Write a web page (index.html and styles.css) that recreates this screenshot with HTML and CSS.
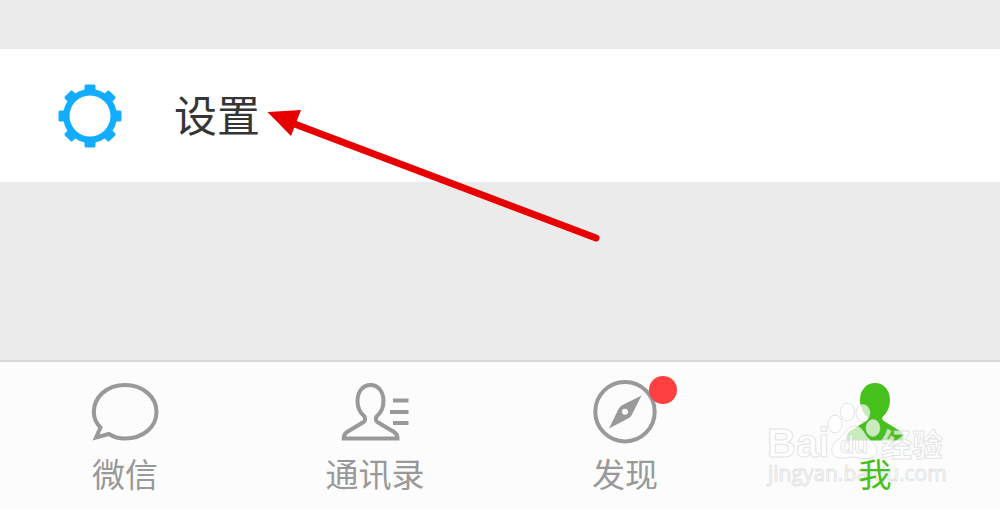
FILE: index.html
```html
<!DOCTYPE html>
<html lang="zh-CN">
<head>
<meta charset="utf-8">
<title>设置</title>
<link rel="stylesheet" href="styles.css">
</head>
<body>
<main class="content">
  <a class="row" href="#">
    <svg class="gear" viewBox="-32 -32 64 64" aria-hidden="true">
      <defs><rect id="tooth" x="-5.5" y="-31.5" width="11" height="10" rx="1.5"/></defs>
      <circle r="27"/>
      <use href="#tooth"/>
      <use href="#tooth" transform="rotate(45)"/>
      <use href="#tooth" transform="rotate(90)"/>
      <use href="#tooth" transform="rotate(135)"/>
      <use href="#tooth" transform="rotate(180)"/>
      <use href="#tooth" transform="rotate(225)"/>
      <use href="#tooth" transform="rotate(270)"/>
      <use href="#tooth" transform="rotate(315)"/>
      <circle class="hole" r="20.5"/>
    </svg>
    <span class="row-label">设置</span>
  </a>
  <svg class="arrow" viewBox="0 0 340 150" aria-hidden="true">
    <path class="shaft" d="M32 23L336 138"/>
    <path class="head" d="M7.500 12L41 10 31 36Z"/>
  </svg>
</main>
<nav class="tabs">
  <a class="tab" href="#">
    <svg class="icon" viewBox="0 0 104 70" aria-hidden="true">
      <path d="M36 59C40.500 62 46 63.500 52 63.500C70 63.500 83.500 52 83.500 37C83.500 22 70 10 52 10C34 10 20.800 22 20.800 37C20.800 43 23 48 27.500 52.500L23 62.500Z"/>
    </svg>
    <span class="tab-label">微信</span>
  </a>
  <a class="tab" href="#">
    <svg class="icon" viewBox="0 0 104 70" aria-hidden="true">
      <path d="M47.500 10C39.500 10 34.500 17 34.500 26C34.500 33 37.500 38 41 41Q42 42 42 43.500V45Q42 46 41 46.700L24 57Q20.800 59 20.800 63.500H74.500Q74.500 59 71 57L54 46.700Q53 46 53 45V43.500Q53 42 54 41C57.500 38 60.500 33 60.500 26C60.500 17 55.500 10 47.500 10ZM70 25.500H85.500M67 37H85.500M70 48H85.500"/>
    </svg>
    <span class="tab-label">通讯录</span>
  </a>
  <a class="tab" href="#">
    <span class="icon-wrap">
      <svg class="icon" viewBox="0 0 104 70" aria-hidden="true">
        <circle cx="52" cy="36.700" r="29.700"/>
        <path class="solid" fill-rule="evenodd" d="M68.500 20.500L59 39.500Q58 41.500 56 43L36 53.500 45.500 34Q46.500 32 48.500 30.500ZM52 33.800a3 3 0 1 0 0 6 3 3 0 1 0 0-6Z"/>
      </svg>
      <span class="dot"></span>
    </span>
    <span class="tab-label">发现</span>
  </a>
  <a class="tab active" href="#">
    <svg class="icon" viewBox="0 0 104 70" aria-hidden="true">
      <path class="solid" d="M52 8C43 8 37 15.500 37 25C37 33 41 39 44.500 42Q45.500 44 44 45.500L27 56Q23.500 58.500 23.500 65.500H80.500Q80.500 58.500 77 56L60 45.500Q58.500 44 59.500 42C63 39 67 33 67 25C67 15.500 61 8 52 8Z"/>
    </svg>
    <span class="tab-label">我</span>
  </a>
  <svg class="watermark" viewBox="0 0 190 96" aria-hidden="true">
    <g class="brand">
      <text class="latin" x="5" y="62">Bai</text>
      <text class="cjk" x="119" y="61">经验</text>
      <ellipse cx="73" cy="29" rx="7" ry="9"/>
      <ellipse cx="85.500" cy="17" rx="7" ry="9"/>
      <ellipse cx="101" cy="18" rx="7" ry="8.500"/>
      <ellipse cx="111" cy="33" rx="7" ry="8.500"/>
      <path d="M93 31C86 31 84 38 78 43C71 48 69 52 70 57C72 65 81 63 91 62C102 64 114 66 115 56C115 50 110 47 105 42C101 36 99 31 93 31Z"/>
      <text class="du" x="78" y="58">du</text>
      <text class="url" x="6" y="86">jingyan.baidu.com</text>
    </g>
  </svg>
</nav>
</body>
</html>
```
FILE: styles.css
```css
* {
  box-sizing: border-box;
}

body {
  margin: 0;
  min-height: 100vh;
  display: flex;
  flex-direction: column;
  background: #ebebeb;
  font-family: "Noto Sans CJK SC", sans-serif;
}

a {
  color: inherit;
  text-decoration: none;
}

.content {
  position: relative;
  flex: 1;
  padding-top: 49px;
}

.row {
  display: flex;
  align-items: flex-end;
  gap: 52px;
  padding: 33px 58px 34px;
  background: #fff;
  color: #353535;
}

.gear {
  width: 64px;
  height: 64px;
  fill: #12adff;
}

.gear .hole {
  fill: #fff;
}

.row-label {
  padding-bottom: 4px;
  font-size: 43px;
  line-height: 62px;
}

.arrow {
  position: absolute;
  left: 260px;
  top: 100px;
  width: 340px;
  height: 150px;
}

.shaft {
  stroke: #e60000;
  stroke-width: 7;
  stroke-linecap: round;
}

.head {
  fill: #e60000;
}

.tabs {
  position: relative;
  display: grid;
  grid-template-columns: repeat(4, 1fr);
  padding: 13px 0 12px;
  border-top: 2px solid #d8d8d8;
  background: #fcfcfc;
}

.tab {
  display: flex;
  flex-direction: column;
  align-items: center;
  gap: 4px;
  color: #999;
}

.active {
  color: #46c01b;
}

.icon-wrap {
  position: relative;
  display: flex;
}

.icon {
  width: 104px;
  height: 70px;
  fill: none;
  stroke: currentColor;
  stroke-width: 4;
}

.icon .solid {
  fill: currentColor;
  stroke: none;
}

.dot {
  position: absolute;
  top: 1px;
  right: 0;
  width: 28px;
  height: 28px;
  border-radius: 50%;
  background: #ff4040;
}

.tab-label {
  position: relative;
  z-index: 1;
  font-size: 33px;
  line-height: 48px;
}

.watermark {
  position: absolute;
  right: 48px;
  bottom: 18px;
  width: 190px;
  height: 96px;
  pointer-events: none;
}

.brand {
  fill: rgba(255, 255, 255, 0.7);
  stroke: rgba(210, 210, 210, 0.6);
  stroke-width: 1;
}

.latin {
  font: bold 40px "Liberation Sans", sans-serif;
}

.cjk {
  font: bold 31px "Noto Sans CJK SC", sans-serif;
}

.du {
  font: bold 23px "Liberation Sans", sans-serif;
}

.url {
  font: 21px "Open Sans", sans-serif;
}
```
